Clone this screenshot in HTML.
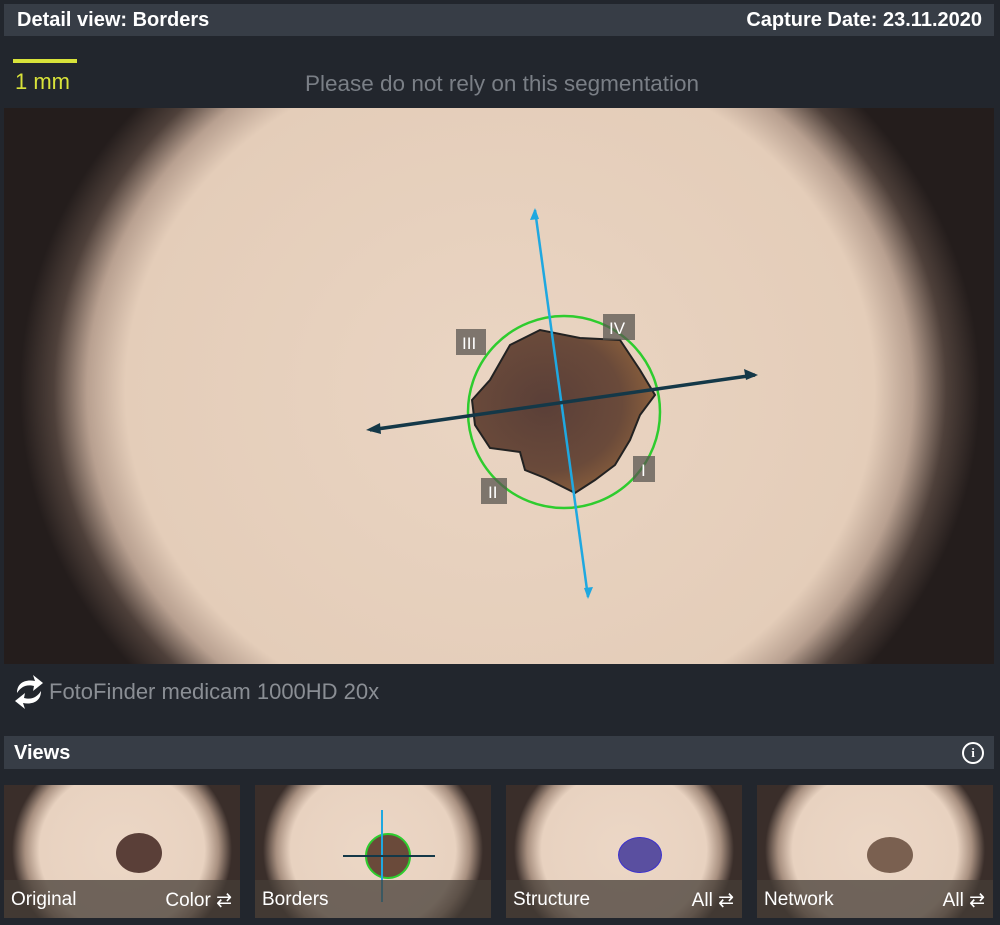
<!DOCTYPE html>
<html><head><meta charset="utf-8"><style>
body{margin:0;width:1000px;height:925px;background:#22262d;font-family:"Liberation Sans",sans-serif;position:relative;overflow:hidden}
.bar{position:absolute;left:4px;width:990px;background:#373d46;color:#fff;font-weight:bold;font-size:20px}
.thumb{position:absolute;top:785px;width:236px;height:133px;overflow:hidden;background:#2a2220}
.thumb .sk{position:absolute;left:0;top:-30px;width:236px;height:190px;background:radial-gradient(ellipse 110px 105px at 118px 95px,#ecd7c6 0%,#e8d2c0 75%,#a89080 88%,#3a2e2a 100%)}
.thumb .lbl{position:absolute;left:0;right:0;bottom:0;height:38px;background:rgba(70,62,55,.75);color:#fff;font-size:19px}
.thumb .l{position:absolute;left:7px;top:9px}.thumb .r{position:absolute;right:8px;top:9px}
</style></head><body>
<div class="bar" style="top:4px;height:32px"><span style="position:absolute;left:13px;top:5px">Detail view: Borders</span><span style="position:absolute;right:12px;top:5px">Capture Date: 23.11.2020</span></div>
<div style="position:absolute;left:13px;top:59px;width:64px;height:4px;background:#d8e23a"></div>
<div style="position:absolute;left:15px;top:69px;color:#d8e23a;font-size:22px">1 mm</div>
<div style="position:absolute;left:305px;top:71px;color:#7a7f86;font-size:22.5px">Please do not rely on this segmentation</div>
<svg style="position:absolute;left:4px;top:108px" width="990" height="556" viewBox="4 108 990 556">
<defs><radialGradient id="g" cx="500" cy="390" r="480" gradientUnits="userSpaceOnUse" gradientTransform="translate(500 390) scale(1 0.9) translate(-500 -390)">
<stop offset="0" stop-color="#ead5c3"/><stop offset="0.78" stop-color="#e4cdb9"/><stop offset="0.86" stop-color="#b8a090"/><stop offset="0.93" stop-color="#4e403a"/><stop offset="1" stop-color="#241d1c"/></radialGradient>
<radialGradient id="m" cx="0.4" cy="0.45" r="0.6"><stop offset="0" stop-color="#5a3f38"/><stop offset="0.7" stop-color="#6a4a3a"/><stop offset="1" stop-color="#8a5f3c"/></radialGradient></defs>
<rect x="4" y="108" width="990" height="556" fill="#241d1c"/>
<rect x="4" y="108" width="990" height="556" fill="url(#g)"/>
<path d="M472 400 L490 380 L510 345 L540 330 L580 338 L620 340 L640 370 L655 395 L640 415 L630 440 L615 465 L595 480 L575 493 L545 478 L525 470 L520 452 L490 448 L475 425 Z" fill="url(#m)" stroke="#222" stroke-width="2"/>
<circle cx="564" cy="412" r="96" fill="none" stroke="#2ecc2e" stroke-width="2.5"/>
<line x1="535" y1="210" x2="588" y2="597" stroke="#1fa8e0" stroke-width="2.5"/>
<path d="M535 208 l-5 12 l9 -1 z M588 599 l5 -12 l-9 1z" fill="#1fa8e0"/>
<line x1="370" y1="430" x2="755" y2="375" stroke="#143848" stroke-width="3.5"/>
<path d="M366 430 l14 -7 l1 11 z M758 375 l-14 -6 l2 11z" fill="#143848"/>
<g fill="rgba(90,85,80,.75)"><rect x="456" y="329" width="30" height="26"/><rect x="603" y="314" width="32" height="26"/><rect x="633" y="456" width="22" height="26"/><rect x="481" y="478" width="26" height="26"/></g>
<g fill="#fff" font-size="17" font-family="Liberation Sans"><text x="462" y="349">III</text><text x="609" y="334">IV</text><text x="641" y="476">I</text><text x="488" y="498">II</text></g>
</svg>
<svg style="position:absolute;left:13px;top:673px" width="32" height="38" viewBox="0 0 32 38"><path d="M4 20 C4 10 12 6 22 8 L20 2 L30 10 L20 18 L21 13 C13 11 8 14 4 20Z M28 18 C28 28 20 32 10 30 L12 36 L2 28 L12 20 L11 25 C19 27 24 24 28 18Z" fill="#fff"/></svg>
<div style="position:absolute;left:49px;top:679px;color:#8a8e94;font-size:22px">FotoFinder medicam 1000HD 20x</div>
<div class="bar" style="top:736px;height:33px"><span style="position:absolute;left:10px;top:6px">Views</span>
<span style="position:absolute;right:10px;top:6px;width:18px;height:18px;border:2px solid #fff;border-radius:50%;font-size:13px;text-align:center;line-height:18px;font-family:'Liberation Serif'">i</span></div>
<div class="thumb" style="left:4px"><div class="sk"></div><div style="position:absolute;left:112px;top:48px;width:46px;height:40px;border-radius:50%;background:#5a3f38"></div><div class="lbl"><span class="l">Original</span><span class="r">Color ⇄</span></div></div>
<div class="thumb" style="left:255px"><div class="sk"></div><div style="position:absolute;left:110px;top:48px;width:42px;height:42px;border-radius:50%;background:#6a4a3a;border:2px solid #2ecc2e"></div><div style="position:absolute;left:126px;top:25px;width:2px;height:92px;background:#1fa8e0"></div><div style="position:absolute;left:88px;top:70px;width:92px;height:2px;background:#143848"></div><div class="lbl"><span class="l">Borders</span></div></div>
<div class="thumb" style="left:506px"><div class="sk"></div><div style="position:absolute;left:112px;top:52px;width:42px;height:34px;border-radius:50%;background:#5a4fa0;border:1px solid #3a2fd0"></div><div class="lbl"><span class="l">Structure</span><span class="r">All ⇄</span></div></div>
<div class="thumb" style="left:757px"><div class="sk"></div><div style="position:absolute;left:110px;top:52px;width:46px;height:36px;border-radius:50%;background:#7a6050"></div><div class="lbl"><span class="l">Network</span><span class="r">All ⇄</span></div></div>
</body></html>
